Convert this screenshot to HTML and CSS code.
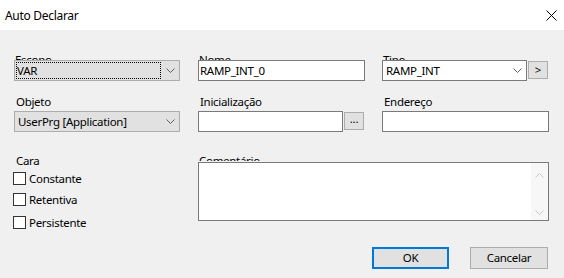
FILE: index.html
```html
<!DOCTYPE html>
<html lang="pt-BR">

<head>
    <meta charset="UTF-8">
    <title>Auto Declarar</title>
    <link rel="stylesheet" href="styles.css">
</head>

<body>
    <div id="dialog">
        <div class="titlebar">
            <span class="title">Auto Declarar</span>
            <svg class="close" width="11" height="11" viewBox="0 0 11 11">
                <path d="M0.5 0.5 L10.5 10.5 M10.5 0.5 L0.5 10.5" stroke="#000" stroke-width="1" fill="none" />
            </svg>
        </div>

        <div class="content">
            <!-- linha 1 -->
            <div class="grid row1">
                <div class="field">
                    <div class="lbl clip">Escopo</div>
                    <div class="combo">
                        <div class="value focus">VAR</div>
                        <div class="arrow">
                            <svg width="9" height="5" viewBox="0 0 9 5"><path d="M0.5 0.5 L4.5 4.5 L8.5 0.5" stroke="#606060" fill="none" /></svg>
                        </div>
                    </div>
                </div>
                <div class="field">
                    <div class="lbl clip">Nome</div>
                    <div class="edit">RAMP_INT_0</div>
                </div>
                <div class="field">
                    <div class="lbl clip">Tipo</div>
                    <div class="with-btn">
                        <div class="combo white">
                            <div class="value">RAMP_INT</div>
                            <div class="arrow">
                                <svg width="9" height="5" viewBox="0 0 9 5"><path d="M0.5 0.5 L4.5 4.5 L8.5 0.5" stroke="#606060" fill="none" /></svg>
                            </div>
                        </div>
                        <div class="small-btn">&gt;</div>
                    </div>
                </div>
            </div>

            <!-- linha 2 -->
            <div class="grid row2">
                <div class="field">
                    <div class="lbl">Objeto</div>
                    <div class="combo">
                        <div class="value">UserPrg [Application]</div>
                        <div class="arrow">
                            <svg width="9" height="5" viewBox="0 0 9 5"><path d="M0.5 0.5 L4.5 4.5 L8.5 0.5" stroke="#606060" fill="none" /></svg>
                        </div>
                    </div>
                </div>
                <div class="field">
                    <div class="lbl">Inicialização</div>
                    <div class="with-btn">
                        <div class="edit"></div>
                        <div class="small-btn dots">...</div>
                    </div>
                </div>
                <div class="field">
                    <div class="lbl">Endereço</div>
                    <div class="edit"></div>
                </div>
            </div>

            <!-- linha 3 -->
            <div class="grid row3">
                <div class="flags">
                    <div class="lbl">Cara</div>
                    <div class="check first"><span class="box"></span>Constante</div>
                    <div class="check second"><span class="box"></span>Retentiva</div>
                    <div class="check third"><span class="box"></span>Persistente</div>
                </div>
                <div class="field comment">
                    <div class="lbl clip">Comentário</div>
                    <div class="memo">
                        <div class="memo-text"></div>
                        <div class="scroll">
                            <svg width="9" height="5" viewBox="0 0 9 5"><path d="M0.5 4.5 L4.5 0.5 L8.5 4.5" stroke="#c8c8c8" fill="none" /></svg>
                            <svg width="9" height="5" viewBox="0 0 9 5"><path d="M0.5 0.5 L4.5 4.5 L8.5 0.5" stroke="#c8c8c8" fill="none" /></svg>
                        </div>
                    </div>
                </div>
            </div>

            <div class="buttons">
                <div class="btn default">OK</div>
                <div class="btn">Cancelar</div>
            </div>
        </div>
    </div>
</body>

</html>
```

FILE: styles.css
```css
body {
    margin: 0;
    padding: 0;
    background-color: #f0f0f0;
    font-family: "Noto Sans", Arial, sans-serif;
    font-size: 11.5px;
    letter-spacing: -0.3px;
    color: #000;
}

#dialog {
    width: 564px;
    height: 278px;
    overflow: hidden;
}

.titlebar {
    height: 30px;
    background-color: #fff;
    display: flex;
    justify-content: space-between;
    align-items: center;
    padding: 0 7px 0 5px;
}

.title {
    font-size: 12px;
}

.close {
    display: block;
}

.content {
    padding: 22px 15px 0 14px;
}

.grid {
    display: grid;
    grid-template-columns: 167px 167px 167px;
    column-gap: 17px;
}

.field {
    display: flex;
    flex-direction: column;
}

.lbl {
    line-height: 15px;
    height: 15px;
    margin-bottom: 2px;
    padding-left: 2px;
    white-space: nowrap;
}

.lbl.clip {
    height: 8px;
    overflow: hidden;
    margin-bottom: 0;
    padding-left: 1px;
}

.row2 {
    margin-top: 13px;
}

.row3 {
    margin-top: 21px;
}

.combo {
    box-sizing: border-box;
    height: 21px;
    display: flex;
    align-items: center;
    background-color: #e1e1e1;
    border: 1px solid #adadad;
    width: 166px;
}

.combo.white {
    background-color: #fff;
    border-color: #7a7a7a;
    width: 145px;
}

.value {
    flex: 1;
    height: 15px;
    line-height: 15px;
    margin: 0 0 0 1px;
    padding-left: 1px;
    white-space: nowrap;
    border: 1px solid transparent;
}

.value.focus {
    border: 1px dotted #000;
    margin-right: 18px;
    padding-left: 0;
}

.combo .arrow {
    width: 18px;
    display: flex;
    justify-content: center;
}

.value.focus + .arrow {
    margin-left: -18px;
}

.combo .arrow svg {
    display: block;
}

.edit {
    box-sizing: border-box;
    height: 21px;
    line-height: 19px;
    background-color: #fff;
    border: 1px solid #7a7a7a;
    padding-left: 1px;
    white-space: nowrap;
}

.with-btn {
    display: flex;
    gap: 1px;
}

.with-btn .edit {
    width: 145px;
}

.small-btn {
    box-sizing: border-box;
    width: 20px;
    height: 18px;
    margin-top: 1px;
    background-color: #e1e1e1;
    border: 1px solid #adadad;
    text-align: center;
    line-height: 15px;
}

.dots {
    line-height: 12px;
}

.flags {
    display: flex;
    flex-direction: column;
}

.flags .lbl {
    margin-bottom: 4px;
}

.check {
    display: flex;
    align-items: center;
    height: 13px;
    line-height: 13px;
    margin-left: -1px;
}

.check.second {
    margin-top: 8px;
}

.check.third {
    margin-top: 10px;
}

.box {
    box-sizing: border-box;
    width: 13px;
    height: 13px;
    border: 1px solid #333;
    background-color: #fff;
    margin-right: 3px;
}

.comment {
    grid-column: 2 / 4;
}

.lbl.clip + .memo {
    margin-top: 1px;
}

.memo {
    box-sizing: border-box;
    height: 59px;
    background-color: #fff;
    border: 1px solid #7a7a7a;
    display: flex;
}

.memo-text {
    flex: 1;
}

.scroll {
    width: 17px;
    background-color: #f7f7f7;
    display: flex;
    flex-direction: column;
    justify-content: space-between;
    align-items: center;
    padding: 10px 0 5px;
}

.scroll svg {
    display: block;
}

.buttons {
    display: flex;
    justify-content: flex-end;
    gap: 21px;
    margin-top: 18px;
    padding-right: 1px;
}

.btn {
    box-sizing: border-box;
    height: 22px;
    width: 78px;
    background-color: #e1e1e1;
    border: 1px solid #adadad;
    text-align: center;
    line-height: 20px;
}

.btn.default {
    width: 77px;
    border: 2px solid #0078d7;
    line-height: 18px;
}
```
